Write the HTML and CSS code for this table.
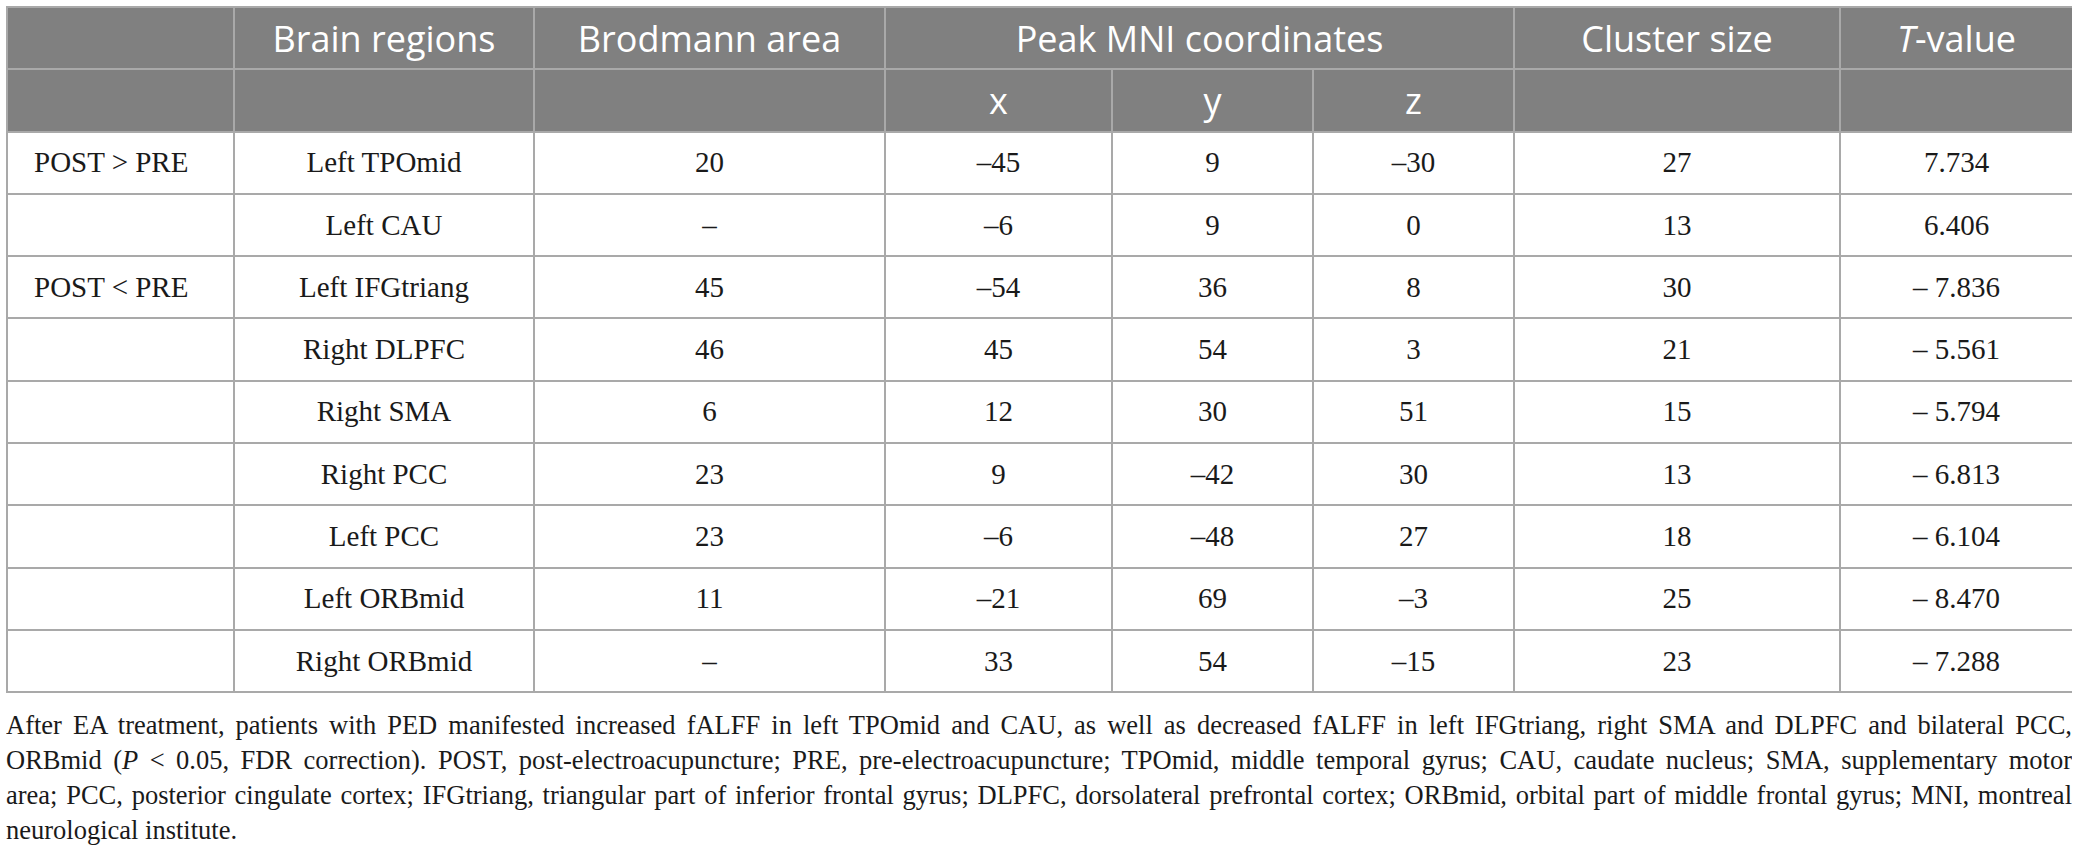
FILE: index.html
```html
<!DOCTYPE html>
<html lang="en">

<head>
    <meta charset="utf-8">
    <title>fALFF changes after EA treatment</title>
    <link rel="stylesheet" href="styles.css">
</head>

<body>
    <table class="data">
        <colgroup>
            <col class="c-group">
            <col class="c-region">
            <col class="c-ba">
            <col class="c-x">
            <col class="c-y">
            <col class="c-z">
            <col class="c-size">
            <col class="c-t">
        </colgroup>
        <thead>
            <tr>
                <th></th>
                <th>Brain regions</th>
                <th>Brodmann area</th>
                <th colspan="3">Peak MNI coordinates</th>
                <th>Cluster size</th>
                <th><i>T</i>-value</th>
            </tr>
            <tr>
                <th></th>
                <th></th>
                <th></th>
                <th>x</th>
                <th>y</th>
                <th>z</th>
                <th></th>
                <th></th>
            </tr>
        </thead>
        <tbody>
            <tr>
                <td class="group">POST &gt; PRE</td>
                <td>Left TPOmid</td>
                <td>20</td>
                <td>–45</td>
                <td>9</td>
                <td>–30</td>
                <td>27</td>
                <td>7.734</td>
            </tr>
            <tr>
                <td class="group"></td>
                <td>Left CAU</td>
                <td>–</td>
                <td>–6</td>
                <td>9</td>
                <td>0</td>
                <td>13</td>
                <td>6.406</td>
            </tr>
            <tr>
                <td class="group">POST &lt; PRE</td>
                <td>Left IFGtriang</td>
                <td>45</td>
                <td>–54</td>
                <td>36</td>
                <td>8</td>
                <td>30</td>
                <td>– 7.836</td>
            </tr>
            <tr>
                <td class="group"></td>
                <td>Right DLPFC</td>
                <td>46</td>
                <td>45</td>
                <td>54</td>
                <td>3</td>
                <td>21</td>
                <td>– 5.561</td>
            </tr>
            <tr>
                <td class="group"></td>
                <td>Right SMA</td>
                <td>6</td>
                <td>12</td>
                <td>30</td>
                <td>51</td>
                <td>15</td>
                <td>– 5.794</td>
            </tr>
            <tr>
                <td class="group"></td>
                <td>Right PCC</td>
                <td>23</td>
                <td>9</td>
                <td>–42</td>
                <td>30</td>
                <td>13</td>
                <td>– 6.813</td>
            </tr>
            <tr>
                <td class="group"></td>
                <td>Left PCC</td>
                <td>23</td>
                <td>–6</td>
                <td>–48</td>
                <td>27</td>
                <td>18</td>
                <td>– 6.104</td>
            </tr>
            <tr>
                <td class="group"></td>
                <td>Left ORBmid</td>
                <td>11</td>
                <td>–21</td>
                <td>69</td>
                <td>–3</td>
                <td>25</td>
                <td>– 8.470</td>
            </tr>
            <tr>
                <td class="group"></td>
                <td>Right ORBmid</td>
                <td>–</td>
                <td>33</td>
                <td>54</td>
                <td>–15</td>
                <td>23</td>
                <td>– 7.288</td>
            </tr>
        </tbody>
    </table>

    <p class="caption">
        <span class="line">After EA treatment, patients with PED manifested increased fALFF in left TPOmid and CAU, as well as decreased fALFF in left IFGtriang, right SMA and DLPFC and bilateral PCC,</span>
        <span class="line">ORBmid (<i>P</i> &lt; 0.05, FDR correction). POST, post-electroacupuncture; PRE, pre-electroacupuncture; TPOmid, middle temporal gyrus; CAU, caudate nucleus; SMA, supplementary motor</span>
        <span class="line">area; PCC, posterior cingulate cortex; IFGtriang, triangular part of inferior frontal gyrus; DLPFC, dorsolateral prefrontal cortex; ORBmid, orbital part of middle frontal gyrus; MNI, montreal</span>
        <span class="line last">neurological institute.</span>
    </p>
</body>

</html>
```

FILE: styles.css
```css
body {
    margin: 6px;
    background-color: #fff;
    color: #1a1a1a;
    font-family: "Liberation Serif", "Times New Roman", serif;
}

table.data {
    width: 2066px;
    border-collapse: collapse;
    table-layout: fixed;
}

.c-group { width: 227px; }
.c-region { width: 300px; }
.c-ba { width: 351px; }
.c-x { width: 227px; }
.c-y { width: 201px; }
.c-z { width: 201px; }
.c-size { width: 326px; }
.c-t { width: 233px; }

table.data tr {
    height: 62.3px;
}

table.data th,
table.data td {
    border: 2px solid #a9a9a9;
    padding: 0 8px;
    text-align: center;
    vertical-align: middle;
}

table.data th {
    background-color: #808080;
    color: #fff;
    font-family: "Open Sans", Lato, sans-serif;
    font-weight: normal;
    font-size: 36px;
}

table.data td {
    font-size: 29px;
}

table.data td.group {
    text-align: left;
    padding-left: 26px;
}

.caption {
    margin: 15px 0 0;
    font-size: 26.5px;
    line-height: 35px;
}

.caption .line {
    display: block;
    text-align: justify;
    text-align-last: justify;
}

.caption .line.last {
    text-align-last: left;
}
```
